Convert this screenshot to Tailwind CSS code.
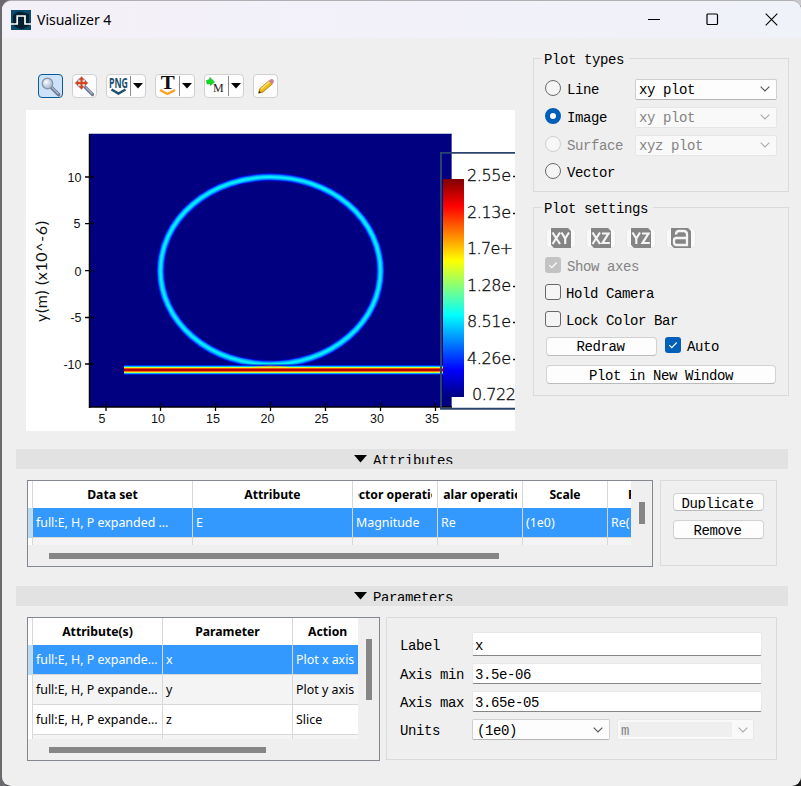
<!DOCTYPE html>
<html lang="en">
<head>
<meta charset="utf-8">
<title>Visualizer 4</title>
<script src="https://cdn.jsdelivr.net/npm/@tailwindcss/browser@4"></script>
</head>
<body class="w-[801px] h-[786px] overflow-hidden bg-[linear-gradient(90deg,#69696e_0_400px,#c9c9cc_400px)] text-black font-['Liberation_Mono',monospace] text-[14px] leading-[18px] tracking-[-0.4px]">
<svg width="0" height="0" class="absolute">
  <defs>
    <symbol id="chev" viewBox="0 0 10 6"><path d="M.7.7 5 5 9.3.7" fill="none" stroke="currentColor" stroke-width="1.1"/></symbol>
    <symbol id="tri" viewBox="0 0 10 6"><path d="M0 0H10L5 5.6Z"/></symbol>
    <symbol id="check" viewBox="0 0 16 16"><path d="M4.3 8.2 6.8 10.7 11.7 5.5" fill="none" stroke="#fff" stroke-width="1.1"/></symbol>
    <radialGradient id="lens" cx=".35" cy=".35"><stop offset="0" stop-color="#fff"/><stop offset="1" stop-color="#b9c8dd"/></radialGradient>
  </defs>
</svg>
<div class="ml-[2px] mt-px w-[799px] h-[785px] rounded-[9px] bg-[#efefef] overflow-hidden shadow-[0_-1px_0_#b0b0b3,3px_3px_0_#1a1a1a]">
  <!-- title bar -->
  <header class="flex h-[37px] items-center bg-linear-to-r from-[#f4f0f8] to-[#f0f2f9] pl-[9px] pr-[23px]">
    <svg width="20" height="20" viewBox="0 0 20 20"><rect width="20" height="20" fill="#0b4a6b"/><path d="M2 6Q5 1 11 2L18 4V16L12 19Q4 19 2 14Z" fill="#03202f"/><path d="M0 14H6.2V6H14V14H20" fill="none" stroke="#fff" stroke-width="1.7"/></svg>
    <h1 class="ml-[6px] flex-1 font-['Noto_Sans',sans-serif] text-[14px] tracking-normal">Visualizer 4</h1>
    <div class="flex items-center gap-[46px]">
      <svg width="12" height="12"><path d="M0 5.5H12" stroke="#000"/></svg>
      <svg width="13" height="13"><rect x="1" y="1" width="10.5" height="10.5" rx="1" fill="none" stroke="#000" stroke-width="1.2"/></svg>
      <svg width="13" height="13"><path d="M.7.7 12.3 12.3M12.3.7.7 12.3" stroke="#000" stroke-width="1.1"/></svg>
    </div>
  </header>

  <div class="flex h-[411px] pl-[24px] pr-[12px]">
    <section class="w-[489px] pt-[36px]">
      <!-- toolbar -->
      <div class="flex h-[24px] gap-[9px] pl-[12px]">
        <div class="flex w-[25px] items-center justify-center rounded-[4px] border border-[#0a5a9c] bg-[#cbe2f8]">
          <svg width="21" height="21" viewBox="0 0 21 21"><path d="M11.5 11.5 18.5 18.5" stroke="#6b7590" stroke-width="3.6" stroke-linecap="round"/><path d="M11.8 11.3 18.5 18" stroke="#aab6d0" stroke-width="1.4"/><circle cx="7.5" cy="7.5" r="5.2" fill="url(#lens)" stroke="#8a96ad" stroke-width="1.4"/></svg>
        </div>
        <div class="flex w-[25px] items-center justify-center rounded-[4px] border border-[#d0d0d0] bg-[#fdfdfd]">
          <svg width="21" height="21" viewBox="0 0 21 21"><path d="M11.5 11.5 18.5 18.5" stroke="#6b7590" stroke-width="3.2" stroke-linecap="round"/><path d="M11.8 11.3 18.5 18" stroke="#aab6d0" stroke-width="1.2"/><circle cx="7.500" cy="7" r="4.8" fill="#ddd5dc" stroke="#a3a3b5"/><path d="M7.500 2V12M2.5 7H12.5" stroke="#d2451e" stroke-width="2"/><path d="M7.500 .3 10.300 3.7H4.700ZM7.500 13.700 10.300 10.300H4.700ZM.8 7 4.200 4.200V9.800ZM14.200 7 10.800 4.200V9.800Z" fill="#d2451e"/></svg>
        </div>
        <div class="flex w-[40px] items-center rounded-[4px] border border-[#d0d0d0] bg-[#fdfdfd]">
          <svg class="shrink-0" width="23" height="22" viewBox="0 0 23 22"><text x="2" y="12.800" textLength="19" lengthAdjust="spacingAndGlyphs" font-family="Noto Sans, sans-serif" font-weight="700" font-size="14.5" letter-spacing="0" fill="#1d4f6e">PNG</text><path d="M4.5 14.500 11.5 18.500 18.500 14.500" fill="none" stroke="#1d4f6e" stroke-width="2.5"/></svg>
          <i class="h-[20px] w-px bg-[#8b8b8b]"></i><svg class="ml-[2px] shrink-0" width="10" height="6"><use href="#tri"/></svg>
        </div>
        <div class="flex w-[40px] items-center rounded-[4px] border border-[#d0d0d0] bg-[#fdfdfd]">
          <svg class="shrink-0" width="23" height="22" viewBox="0 0 23 22"><text x="4.800" y="14" textLength="14" lengthAdjust="spacingAndGlyphs" font-family="Liberation Serif, serif" font-weight="700" font-size="18.500" letter-spacing="0" fill="#111">T</text><path d="M4 15 11.5 19 19 15" fill="none" stroke="#ff9d1c" stroke-width="2.3"/></svg>
          <i class="h-[20px] w-px bg-[#8b8b8b]"></i><svg class="ml-[2px] shrink-0" width="10" height="6"><use href="#tri"/></svg>
        </div>
        <div class="flex w-[40px] items-center rounded-[4px] border border-[#d0d0d0] bg-[#fdfdfd]">
          <svg class="shrink-0" width="23" height="22" viewBox="0 0 23 22"><path d="M1.500 5.500 4.800 4.500V2.500L9.500 7 5.500 10.500V8.800L2.200 9Z" fill="#0de01e" stroke="#05a512" stroke-width=".6"/><text x="8" y="17.300" font-family="Liberation Serif, serif" font-size="12" letter-spacing="0" fill="#222">M</text></svg>
          <i class="h-[20px] w-px bg-[#8b8b8b]"></i><svg class="ml-[2px] shrink-0" width="10" height="6"><use href="#tri"/></svg>
        </div>
        <div class="flex w-[25px] items-center justify-center rounded-[4px] border border-[#d0d0d0] bg-[#fdfdfd]">
          <svg class="-mt-px" width="18" height="18" viewBox="0 0 18 18"><path d="M1.500 16.200 2.800 11.600 12 3.800 15.300 7 6 15Z" fill="#f2b90f" stroke="#9a6a05" stroke-width=".7"/><path d="M4 12 12.500 4.700" stroke="#ffe37a" stroke-width="1.500"/><path d="M12 3.800 13.300 2.500Q15 1.200 16.300 2.700 17.700 4.300 16.300 6L15.300 7Z" fill="#d07d9d"/><path d="M1.500 16.200 2.200 13.800 4 15.500Z" fill="#222"/></svg>
        </div>
      </div>

      <!-- field plot -->
      <svg class="mt-[12px] block" width="489" height="321" viewBox="26 110 489 321" letter-spacing="0">
        <defs>
          <linearGradient id="jet" x1="0" y1="1" x2="0" y2="0"><stop offset="0" stop-color="#000080"/><stop offset=".125" stop-color="#0000ff"/><stop offset=".375" stop-color="#00ffff"/><stop offset=".625" stop-color="#ffff00"/><stop offset=".875" stop-color="#ff0000"/><stop offset="1" stop-color="#800000"/></linearGradient>
          <linearGradient id="guide" x1="0" y1="0" x2="0" y2="1"><stop offset="0" stop-color="#0000a0"/><stop offset=".1" stop-color="#0030ff"/><stop offset=".2" stop-color="#00d8ff"/><stop offset=".28" stop-color="#d8ff30"/><stop offset=".35" stop-color="#ff7000"/><stop offset=".44" stop-color="#c80000"/><stop offset=".5" stop-color="#960000"/><stop offset=".58" stop-color="#c80000"/><stop offset=".68" stop-color="#ff9000"/><stop offset=".75" stop-color="#d8ff30"/><stop offset=".84" stop-color="#00d0ff"/><stop offset=".9" stop-color="#0030ff"/><stop offset="1" stop-color="#0000a0"/></linearGradient>
        </defs>
        <rect x="26" y="110" width="489" height="321" fill="#fff"/>
        <rect x="89" y="133" width="363" height="274" fill="#b9b9dc"/>
        <rect x="89.500" y="134" width="362" height="273" fill="#000080"/>
        <g fill="none">
          <ellipse cx="270.500" cy="270.700" rx="110" ry="93.700" stroke="#0000b8" stroke-width="8.500"/>
          <ellipse cx="270.500" cy="270.700" rx="110" ry="93.700" stroke="#0020f8" stroke-width="7.200"/>
          <ellipse cx="270.500" cy="270.700" rx="110" ry="93.700" stroke="#0078ff" stroke-width="5.700"/>
          <ellipse cx="270.500" cy="270.700" rx="110" ry="93.700" stroke="#00b4ff" stroke-width="4.200"/>
          <ellipse cx="270.500" cy="270.700" rx="110" ry="93.700" stroke="#08ecff" stroke-width="2.200"/>
        </g>
        <rect x="124" y="364.600" width="319" height="10.400" fill="url(#guide)"/>
        <path d="M250 366.800Q270 364.800 291 366.800Z" fill="#f0a020"/>
        <path d="M89.500 134V408M89 407H452" stroke="#000" stroke-width="1.500" fill="none"/>
        <path d="M85 177H94M85 223.700H94M85 270.700H94M85 317.500H94M85 364H94M106 403V411M160.500 403V411M215.500 403V411M270.500 402V411M325.500 403V411M380.500 403V411M435.500 403V411" stroke="#000" stroke-width="1.300"/>
        <rect x="443" y="179" width="21" height="218" fill="url(#jet)"/>
        <path d="M520 152.900H441V408.800H520" fill="none" stroke="#2c4570" stroke-width="1.900"/>
        <g font-family="Liberation Sans, sans-serif" font-size="12.500" fill="#111">
          <g text-anchor="end"><text x="81.500" y="181.500">10</text><text x="80.500" y="228">5</text><text x="81.500" y="275.500">0</text><text x="81.500" y="322">-5</text><text x="81.500" y="368.500">-10</text></g>
          <g text-anchor="middle"><text x="102" y="423">5</text><text x="158" y="423">10</text><text x="213" y="423">15</text><text x="267.500" y="423">20</text><text x="321.500" y="423">25</text><text x="377" y="423">30</text><text x="432" y="423">35</text></g>
        </g>
        <text transform="translate(47 322) rotate(-90)" textLength="101" font-family="Lato, sans-serif" font-size="16" fill="#111">y(m) (x10^-6)</text>
        <g font-family="DejaVu Sans, sans-serif" font-weight="200" font-size="16" fill="#111" stroke="#111" stroke-width=".35">
          <text x="467" y="181" textLength="44">2.55e</text><text x="467" y="218" textLength="44">2.13e</text><text x="467" y="254" textLength="46">1.7e+</text><text x="467" y="291" textLength="44">1.28e</text><text x="467" y="327" textLength="44">8.51e</text><text x="467" y="364" textLength="44">4.26e</text><text x="472" y="400" textLength="44">0.722</text>
          <path d="M513 176.500H515M513 213.500H515M513 286.500H515M513 322.500H515M513 359.500H515" stroke="#111" stroke-width="1.300"/>
        </g>
      </svg>
    </section>

    <aside class="ml-[18px] w-[256px] pt-[20px] [&_span]:pt-[2px]">
      <section class="flex h-[134px] flex-col border border-[#dadada]">
        <h2 class="-mt-[8px] ml-[7px] w-[88px] bg-[#efefef] pl-[3px]">Plot types</h2>
        <div class="flex flex-col pl-[11px] pr-[11px] pt-[6px]">
          <div class="flex h-[28px] items-center"><i class="size-[16px] rounded-full border border-[#6a6a6a] bg-[#f5f5f5] -mt-[2px]"></i><span class="ml-[6px] w-[68px]">Line</span><div class="flex h-[21px] flex-1 items-center justify-between rounded-[2px] border border-[#cfcfcf] border-b-[#b5b5b5] bg-[#fdfdfd] pl-[3px] pr-[6px]"><span>xy plot</span><svg class="text-[#555]" width="10" height="6"><use href="#chev"/></svg></div></div>
          <div class="flex h-[28px] items-center"><i class="size-[16px] rounded-full border-[5px] border-[#005fb8] bg-white -mt-[2px]"></i><span class="ml-[6px] w-[68px]">Image</span><div class="flex h-[21px] flex-1 items-center justify-between rounded-[2px] border border-[#e6e6e6] bg-[#f9f9f9] pl-[3px] pr-[6px] text-[#848484]"><span>xy plot</span><svg class="text-[#aaa]" width="10" height="6"><use href="#chev"/></svg></div></div>
          <div class="flex h-[28px] items-center text-[#848484]"><i class="size-[16px] rounded-full border border-[#cfcfcf] bg-[#f7f7f7] -mt-[2px]"></i><span class="ml-[6px] w-[68px]">Surface</span><div class="flex h-[21px] flex-1 items-center justify-between rounded-[2px] border border-[#e6e6e6] bg-[#f9f9f9] pl-[3px] pr-[6px]"><span>xyz plot</span><svg class="text-[#aaa]" width="10" height="6"><use href="#chev"/></svg></div></div>
          <div class="flex h-[26px] items-center"><i class="size-[16px] rounded-full border border-[#6a6a6a] bg-[#f5f5f5] -mt-[2px]"></i><span class="ml-[6px]">Vector</span></div>
        </div>
      </section>
      <section class="mt-[15px] flex h-[189px] flex-col border border-[#dadada]">
        <h2 class="-mt-[8px] ml-[7px] w-[112px] bg-[#efefef] pl-[3px]">Plot settings</h2>
        <div class="pl-[12px] pr-[12px] pt-[10px]">
          <div class="flex gap-[10px]">
            <div class="flex h-[20px] w-[30px] justify-center rounded-[4px] border border-[#eaeaea] bg-[#f9f9f9]"><svg class="-mt-px shrink-0" width="20" height="20"><path d="M0 0H17L20 3V20H3L0 17Z" fill="#858585"/><path d="M1.500 4.500 9 16M9 4.500 1.500 16M10.500 4.500 14.200 10.500 18 4.500M14.200 10V16" fill="none" stroke="#f5f5f5" stroke-width="2.200"/></svg></div>
            <div class="flex h-[20px] w-[30px] justify-center rounded-[4px] border border-[#eaeaea] bg-[#f9f9f9]"><svg class="-mt-px shrink-0" width="20" height="20"><path d="M0 0H17L20 3V20H3L0 17Z" fill="#858585"/><path d="M1.500 4.500 9 16M9 4.500 1.500 16M11 5.500H17.500L11.500 15H18.800" fill="none" stroke="#f5f5f5" stroke-width="2.200"/></svg></div>
            <div class="flex h-[20px] w-[30px] justify-center rounded-[4px] border border-[#eaeaea] bg-[#f9f9f9]"><svg class="-mt-px shrink-0" width="20" height="20"><path d="M0 0H17L20 3V20H3L0 17Z" fill="#858585"/><path d="M1.500 4.500 5.300 10.500 9 4.500M5.300 10V16M11 5.500H17.500L11.500 15H18.800" fill="none" stroke="#f5f5f5" stroke-width="2.200"/></svg></div>
            <div class="flex h-[20px] w-[30px] justify-center rounded-[4px] border border-[#eaeaea] bg-[#f9f9f9]"><svg class="-mt-px shrink-0" width="20" height="20"><path d="M0 0H17L20 3V20H3L0 17Z" fill="#858585"/><path d="M5 6.500Q5 3 8 3H12.500Q16 3 16 6.500V17H5.500Q3 17 3 14.500V12.500Q3 10 5.500 10H16" fill="none" stroke="#f5f5f5" stroke-width="2.300"/></svg></div>
          </div>
          <div class="-ml-px mt-[4px] flex h-[27px] items-center text-[#848484]"><svg class="-mt-[2px] rounded-[3px] bg-[#c3c3c3]" width="16" height="16"><use href="#check"/></svg><span class="ml-[6px]">Show axes</span></div>
          <div class="-ml-px flex h-[27px] items-center"><i class="-mt-[2px] size-[16px] rounded-[3px] border border-[#686868] bg-[#f5f5f5]"></i><span class="ml-[5px]">Hold Camera</span></div>
          <div class="-ml-px flex h-[27px] items-center"><i class="-mt-[2px] size-[16px] rounded-[3px] border border-[#686868] bg-[#f5f5f5]"></i><span class="ml-[5px]">Lock Color Bar</span></div>
          <div class="mt-[4px] flex h-[18px] items-center"><div class="flex h-[19px] w-[111px] items-center justify-center rounded-[4px] border border-[#d2d2d2] border-b-[#bbb] bg-[#fdfdfd] pr-[2px] pt-[2px]">Redraw</div><svg class="ml-[8px] -mt-[2px] rounded-[3px] bg-[#005fb8]" width="16" height="16"><use href="#check"/></svg><span class="ml-[6px]">Auto</span></div>
          <div class="mt-[10px] flex h-[19px] items-center justify-center rounded-[4px] border border-[#d2d2d2] border-b-[#bbb] bg-[#fdfdfd] pt-[2px]">Plot in New Window</div>
        </div>
      </section>
    </aside>
  </div>

  <!-- attributes -->
  <div class="ml-[14px] flex h-[20px] w-[772px] bg-[#e2e2e2] pl-[338px] pt-[3px]"><svg class="mt-[3px]" width="13" height="8" viewBox="0 0 10 6"><use href="#tri"/></svg><h2 class="ml-[6px] h-[12px] overflow-hidden leading-[19px]">Attributes</h2></div>
  <div class="mt-[11px] flex gap-[7px] pl-[25px]">
    <div class="h-[87px] w-[626px] border border-[#828790] bg-[#efefef] font-['Noto_Sans',sans-serif] text-[12.4px] tracking-normal">
      <div class="flex h-[64px]">
        <div class="grid w-[603px] grid-cols-[5px_160px_160px_85px_85px_85px_23px] grid-rows-[27px_30px_7px] overflow-hidden whitespace-nowrap bg-white [&>*]:overflow-hidden [&>*]:border-[#d8d8d8] [&>*]:border-r [&>b]:text-[12.2px]">
          <b></b><b class="flex items-center justify-center">Data set</b><b class="flex items-center justify-center">Attribute</b><b class="flex items-center px-[5px]"><span class="flex min-w-0 flex-1 justify-center overflow-hidden">Vector operation</span></b><b class="flex items-center px-[5px]"><span class="flex min-w-0 flex-1 justify-center overflow-hidden">Scalar operation</span></b><b class="flex items-center justify-center">Scale</b><b class="flex items-center border-none! pl-[20px]">R</b>
          <span class="bg-[#b9dcf3]"></span><span class="flex items-center border-b bg-[#3399ff] pl-[3px] text-white">full:E, H, P expanded ...</span><span class="flex items-center border-b bg-[#3399ff] pl-[3px] text-white">E</span><span class="flex items-center border-b bg-[#3399ff] pl-[3px] text-white">Magnitude</span><span class="flex items-center border-b bg-[#3399ff] pl-[3px] text-white">Re</span><span class="flex items-center border-b bg-[#3399ff] pl-[3px] text-white">(1e0)</span><span class="flex items-center border-b border-r-0! bg-[#3399ff] pl-[3px] text-white">Re(</span>
          <span></span><span class="bg-[#f4f4f4]"></span><span class="bg-[#f4f4f4]"></span><span class="bg-[#f4f4f4]"></span><span class="bg-[#f4f4f4]"></span><span class="bg-[#f4f4f4]"></span><span class="border-none! bg-[#f4f4f4]"></span>
        </div>
        <i class="ml-[8px] mt-[21px] h-[22px] w-[6px] bg-[#868686]"></i>
      </div>
      <div class="ml-[21px] mt-[8px] h-[6px] w-[450px] bg-[#868686]"></div>
    </div>
    <div class="flex h-[86px] w-[117px] flex-col gap-[8px] border border-[#dadada] px-[12px] pt-[12px]">
      <div class="h-[18px] rounded-[4px] border border-[#d2d2d2] border-b-[#bbb] bg-[#fdfdfd] pr-[2px] text-center"><span class="block h-[15px] overflow-hidden leading-[20px]">Duplicate</span></div>
      <div class="mt-px h-[19px] rounded-[4px] border border-[#d2d2d2] border-b-[#bbb] bg-[#fdfdfd] pr-[2px] text-center leading-[20px]">Remove</div>
    </div>
  </div>

  <!-- parameters -->
  <div class="ml-[14px] mt-[19px] flex h-[20px] w-[772px] bg-[#e2e2e2] pl-[338px] pt-[3px]"><svg class="mt-[3px]" width="13" height="8" viewBox="0 0 10 6"><use href="#tri"/></svg><h2 class="ml-[6px] h-[12px] overflow-hidden leading-[19px]">Parameters</h2></div>
  <div class="mt-[11px] flex gap-[6px] pl-[25px]">
    <div class="h-[144px] w-[353px] border border-[#828790] bg-[#efefef] font-['Noto_Sans',sans-serif] text-[12.4px] tracking-normal">
      <div class="flex h-[121px]">
        <div class="grid w-[330px] grid-cols-[5px_130px_130px_65px] grid-rows-[27px_30px_30px_30px_4px] overflow-hidden whitespace-nowrap bg-white [&>*]:overflow-hidden [&>*]:border-[#d8d8d8] [&>*]:border-r [&>b]:text-[12.2px]">
          <b></b><b class="flex items-center justify-center">Attribute(s)</b><b class="flex items-center justify-center">Parameter</b><b class="flex items-center border-none! pl-[15px]">Action</b>
          <span class="bg-[#b9dcf3]"></span><span class="flex items-center border-b bg-[#3399ff] pl-[3px] text-white">full:E, H, P expande...</span><span class="flex items-center border-b bg-[#3399ff] pl-[3px] text-white">x</span><span class="flex items-center border-b border-r-0! bg-[#3399ff] pl-[3px] text-white">Plot x axis</span>
          <span></span><span class="flex items-center border-b bg-[#f4f4f4] pl-[3px]">full:E, H, P expande...</span><span class="flex items-center border-b bg-[#f4f4f4] pl-[3px]">y</span><span class="flex items-center border-b border-r-0! bg-[#f4f4f4] pl-[3px]">Plot y axis</span>
          <span></span><span class="flex items-center border-b pl-[3px]">full:E, H, P expande...</span><span class="flex items-center border-b pl-[3px]">z</span><span class="flex items-center border-b border-r-0! pl-[3px]">Slice</span>
          <span></span><span class="bg-[#f4f4f4]"></span><span class="bg-[#f4f4f4]"></span><span class="border-none! bg-[#f4f4f4]"></span>
        </div>
        <i class="ml-[8px] mt-[21px] h-[61px] w-[6px] bg-[#868686]"></i>
      </div>
      <div class="ml-[21px] mt-[8px] h-[6px] w-[217px] bg-[#868686]"></div>
    </div>
    <div class="flex h-[143px] w-[391px] flex-col gap-[7px] border border-[#dadada] pl-[13px] pr-[14px] pt-[14px]">
      <div class="flex h-[24px] items-center"><span class="w-[72px] pt-[4px]">Label</span><div class="flex h-full flex-1 items-center rounded-[2px] border border-[#e8e8e8] border-b-[#868686] bg-white pl-[2px] pt-[4px]">x</div></div>
      <div class="flex h-[21px] items-center"><span class="w-[72px] pt-[3px]">Axis min</span><div class="flex h-full flex-1 items-center rounded-[2px] border border-[#e8e8e8] border-b-[#868686] bg-white pl-[2px] pt-[3px]">3.5e-06</div></div>
      <div class="flex h-[21px] items-center"><span class="w-[72px] pt-[3px]">Axis max</span><div class="flex h-full flex-1 items-center rounded-[2px] border border-[#e8e8e8] border-b-[#868686] bg-white pl-[2px] pt-[3px]">3.65e-05</div></div>
      <div class="flex h-[21px] items-center"><span class="w-[72px] pt-[3px]">Units</span>
        <div class="flex h-full w-[138px] items-center justify-between rounded-[2px] border border-[#cfcfcf] border-b-[#b5b5b5] bg-[#fdfdfd] pl-[4px] pr-[6px]"><span class="pt-[2px]">(1e0)</span><svg class="text-[#555]" width="10" height="6"><use href="#chev"/></svg></div>
        <div class="ml-[7px] flex h-full w-[137px] items-center justify-between rounded-[2px] border border-[#e8e8e8] bg-[#f9f9f9] pl-[2px] pr-[5px] text-[#848484]"><span class="h-[15px] w-[112px] bg-[#efefef] pl-px leading-[18px]">m</span><svg class="text-[#aaa]" width="10" height="6"><use href="#chev"/></svg></div>
      </div>
    </div>
  </div>
</div>
</body>
</html>
